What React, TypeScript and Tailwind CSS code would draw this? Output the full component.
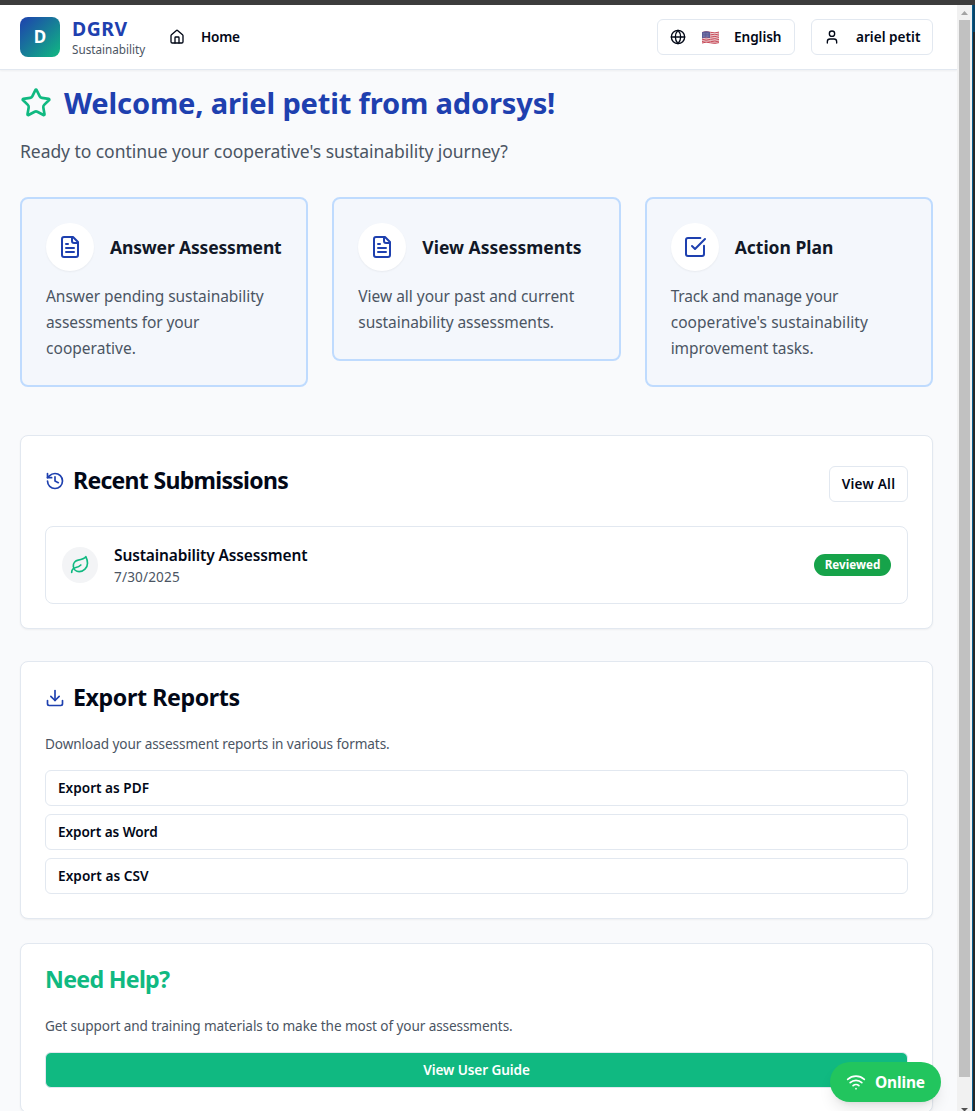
import type { ReactNode } from "react";
import { Download, Globe, History, House, Leaf, SquareCheckBig, Star, User, Wifi } from "lucide-react";

const outline = "flex items-center rounded-md border border-[#e2e8f0] bg-white text-[13.6px] font-[560] text-[#020817]";

function FlagUS() {
  return (
    <svg width="17" height="13" viewBox="0 0 17 13">
      <path d="M0 1.2 Q4 -0.3 8.5 1 T17 0.8 V11.8 Q13 13.3 8.5 12 T0 12.2Z" fill="#f1e4e6" />
      <g stroke="#c5404f" strokeWidth="0.95" fill="none">
        <path d="M0 1.5 Q4 0 8.5 1.3 T17 1.1" />
        <path d="M0 3.4 Q4 1.9 8.5 3.2 T17 3" />
        <path d="M0 5.2 Q4 3.7 8.5 5 T17 4.8" />
        <path d="M0 7 Q4 5.5 8.5 6.8 T17 6.6" />
        <path d="M0 8.8 Q4 7.3 8.5 8.6 T17 8.4" />
        <path d="M0 10.5 Q4 9 8.5 10.3 T17 10.1" />
        <path d="M0 12 Q4 10.5 8.5 11.8 T17 11.6" />
      </g>
      <path d="M0 1.2 Q4 -0.3 8 0.9 V7 Q4 5.8 0 7.2Z" fill="#5d5c96" />
      <path d="M1 2.7h6M1 4.2h6M1 5.6h6" stroke="#a9a8cc" strokeWidth="0.5" strokeDasharray="0.7 0.7" />
    </svg>
  );
}

function FileIcon() {
  return (
    <svg width="24" height="24" viewBox="0 0 24 24" fill="none" stroke="currentColor" strokeWidth="2" strokeLinecap="round" strokeLinejoin="round">
      <path d="M15 2H6a2 2 0 0 0-2 2v16a2 2 0 0 0 2 2h12a2 2 0 0 0 2-2V7Z" />
      <path d="M14 2v4a2 2 0 0 0 2 2h4" />
      <path d="M10 9H8M16 13H8M16 17H8" />
    </svg>
  );
}

function ActionCard({ icon, title, titleClass, lines }: { icon: ReactNode; title: string; titleClass: string; lines: { text: string; track: string }[] }) {
  return (
    <div className="rounded-lg border-2 border-[#bfdbfe] bg-[#f4f7fc] p-6">
      <div className="mb-3 flex items-center gap-4">
        <div className="flex size-12 shrink-0 items-center justify-center rounded-full bg-white text-[#1e40af] shadow-xs">{icon}</div>
        <h3 className={`text-[17.5px] leading-7 font-bold whitespace-nowrap text-[#111827] ${titleClass}`}>{title}</h3>
      </div>
      <p className="text-[15.5px] leading-[26px] text-[#4b5563]">
        {lines.map((l) => (
          <span key={l.text} className={`block whitespace-nowrap ${l.track}`}>{l.text}</span>
        ))}
      </p>
    </div>
  );
}

function Scrollbar() {
  return (
    <div className="flex w-[18px] shrink-0">
      <div className="flex w-[15px] flex-col items-center bg-[#f1f1f1]">
        <svg className="shrink-0" width="15" height="15" viewBox="0 0 15 15"><path d="M4 10 L7.5 6 L11 10Z" fill="#a3a3a3" /></svg>
        <div className="w-[11px] flex-1 bg-[#c1c1c1]" />
        <svg className="shrink-0" width="15" height="34" viewBox="0 0 15 34"><path d="M4 31 H11 L8 34 H7Z" fill="#505050" /></svg>
      </div>
      <div className="w-px bg-[#0a5c8c]" />
      <div className="flex flex-1 flex-col bg-[#262626]">
        <div className="h-[27px] bg-[#0a4468]" />
      </div>
    </div>
  );
}

export default function App() {
  return (
    <div className="flex h-[1111px] w-[975px] flex-col overflow-hidden bg-[#3c3c3c] pt-[5px] font-['Noto_Sans',sans-serif] text-[#020817]">
      <div className="flex min-h-0 flex-1">
        <div className="relative flex min-w-0 flex-1 flex-col overflow-hidden bg-[#f9fafc]">
          <header className="flex h-[65px] shrink-0 items-center justify-between border-b border-[#e2e8f0] bg-white pr-6 pl-5 shadow-xs">
            <div className="flex items-center">
              <div className="flex size-10 items-center justify-center rounded-lg bg-linear-to-br/srgb from-[#1e40af] to-[#10b981] text-[17px] font-bold text-white">D</div>
              <div className="ml-3 w-[97px]">
                <div className="text-[19.4px] leading-[24px] font-bold tracking-[0.5px] text-[#1e40af]">DGRV</div>
                <div className="pt-px text-[11.7px] leading-[15px] text-[#4b5563]">Sustainability</div>
              </div>
              <House className="size-4" />
              <span className="ml-4 text-[13.6px] leading-5 font-[560] tracking-[-0.25px]">Home</span>
            </div>
            <div className="flex gap-4">
              <button className={`${outline} h-9 w-[138px] pl-3`}>
                <Globe className="size-4" />
                <span className="ml-4"><FlagUS /></span>
                <span className="ml-[15px] tracking-[-0.05px]">English</span>
              </button>
              <button className={`${outline} h-9 w-[122px] pl-3`}>
                <User className="size-4" />
                <span className="ml-4 tracking-[0.01px] whitespace-nowrap">ariel petit</span>
              </button>
            </div>
          </header>

          <main className="flex flex-col pr-6 pl-5">
            <div className="mt-[15px] flex items-center gap-3">
              <Star className="size-8 text-[#10b981]" />
              <h1 className="text-[29.1px] leading-9 font-bold tracking-[-0.18px] whitespace-nowrap text-[#1e40af]">Welcome, ariel petit from adorsys!</h1>
            </div>
            <p className="mt-4 text-[17.5px] leading-7 tracking-[-0.055px] whitespace-nowrap text-[#4b5563]">Ready to continue your cooperative's sustainability journey?</p>

            <div className="mt-8 grid grid-cols-3 items-start gap-6">
              <ActionCard icon={<FileIcon />} title="Answer Assessment" titleClass="tracking-[-0.16px]" lines={[
                { text: "Answer pending sustainability", track: "tracking-[-0.04px]" },
                { text: "assessments for your", track: "tracking-[-0.1px]" },
                { text: "cooperative.", track: "tracking-[0.03px]" },
              ]} />
              <ActionCard icon={<FileIcon />} title="View Assessments" titleClass="tracking-normal" lines={[
                { text: "View all your past and current", track: "tracking-[-0.02px]" },
                { text: "sustainability assessments.", track: "tracking-[-0.06px]" },
              ]} />
              <ActionCard icon={<SquareCheckBig className="size-6" />} title="Action Plan" titleClass="tracking-normal" lines={[
                { text: "Track and manage your", track: "tracking-[-0.17px]" },
                { text: "cooperative's sustainability", track: "tracking-[0.05px]" },
                { text: "improvement tasks.", track: "tracking-[-0.05px]" },
              ]} />
            </div>

            <section className="mt-12 rounded-lg border border-[#e2e8f0] bg-white px-6 pt-6 pb-6 shadow-xs">
              <div className="flex h-[42px] items-start justify-between">
                <h2 className="mt-1 flex items-center gap-2">
                  <History className="mt-0.5 size-5 text-[#1e40af]" />
                  <span className="text-[23px] leading-8 font-bold tracking-[-0.7px]">Recent Submissions</span>
                </h2>
                <button className={`${outline} mt-1.5 h-9 w-[79px] justify-center tracking-[0.22px]`}>View All</button>
              </div>
              <div className="mt-6 flex h-[78px] items-center rounded-lg border border-[#e2e8f0] px-4">
                <div className="flex size-9 items-center justify-center rounded-full bg-[#f3f4f6]"><Leaf className="size-5 text-[#10b981]" /></div>
                <div className="ml-4 flex-1">
                  <div className="text-[15.5px] leading-6 font-[560] tracking-[-0.13px]">Sustainability Assessment</div>
                  <div className="text-[13.6px] leading-5 tracking-[0.15px] text-[#4b5563]">7/30/2025</div>
                </div>
                <div className="flex h-[22px] w-[77px] items-center justify-center rounded-full bg-[#16a34a] text-[11.7px] font-bold text-white">Reviewed</div>
              </div>
            </section>

            <section className="mt-8 rounded-lg border border-[#e2e8f0] bg-white px-6 pt-5 pb-6 shadow-xs">
              <h2 className="flex items-center gap-2">
                <Download className="size-5 text-[#1e40af]" />
                <span className="-mt-0.5 text-[23.2px] leading-[34px] font-bold tracking-[-0.4px]">Export Reports</span>
              </h2>
              <p className="mt-5 text-[13.6px] leading-5 tracking-[-0.09px] text-[#4b5563]">Download your assessment reports in various formats.</p>
              <div className="mt-4 flex flex-col gap-2">
                <button className={`${outline} h-9 px-3 tracking-[0.01px]`}>Export as PDF</button>
                <button className={`${outline} h-9 px-3 tracking-[-0.06px]`}>Export as Word</button>
                <button className={`${outline} h-9 px-3 tracking-[0.06px]`}>Export as CSV</button>
              </div>
            </section>

            <section className="mt-6 h-[170px] rounded-lg border border-[#e2e8f0] bg-white px-6 pt-[19px] shadow-xs">
              <h2 className="text-[23.2px] leading-8 font-bold tracking-[-0.7px] text-[#10b981]">Need Help?</h2>
              <p className="mt-[21px] text-[13.6px] leading-5 tracking-[-0.1px] text-[#4b5563]">Get support and training materials to make the most of your assessments.</p>
              <button className="mt-4 flex h-9 w-full items-center justify-center rounded-md border border-[#e2e8f0] bg-[#10b981] text-[13.6px] font-[560] tracking-[-0.1px] text-white">View User Guide</button>
            </section>
          </main>

          <div className="absolute right-4 bottom-[9px] flex h-10 w-[111px] items-center rounded-full bg-[#22c55e] pl-4 text-white shadow-lg">
            <Wifi className="size-5" />
            <span className="mt-px ml-[9px] text-[15.5px] font-bold tracking-[-0.16px]">Online</span>
          </div>
        </div>
        <Scrollbar />
      </div>
    </div>
  );
}
